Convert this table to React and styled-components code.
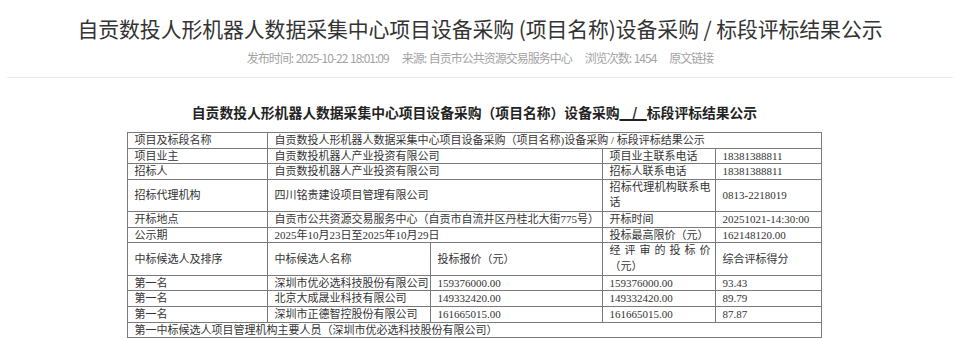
import React from 'react';
import styled, { createGlobalStyle } from 'styled-components';

const GlobalStyle = createGlobalStyle`
  body {
    margin: 0;
    background: #fff;
    font-family: 'Noto Sans CJK SC', 'Noto Sans', sans-serif;
  }
`;

const rows = [
  { label: '项目业主', value: '自贡数投机器人产业投资有限公司', label2: '项目业主联系电话', value2: '18381388811' },
  { label: '招标人', value: '自贡数投机器人产业投资有限公司', label2: '招标人联系电话', value2: '18381388811' },
  { label: '招标代理机构', value: '四川铭贵建设项目管理有限公司', label2: '招标代理机构联系电话', value2: '0813-2218019', wrap: true },
  { label: '开标地点', value: '自贡市公共资源交易服务中心（自贡市自流井区丹桂北大街775号）', label2: '开标时间', value2: '20251021-14:30:00' },
  { label: '公示期', value: '2025年10月23日至2025年10月29日', label2: '投标最高限价（元）', value2: '162148120.00' },
];

const candidates = [
  { name: '深圳市优必选科技股份有限公司', bid: '159376000.00', reviewed: '159376000.00', score: '93.43' },
  { name: '北京大成晟业科技有限公司', bid: '149332420.00', reviewed: '149332420.00', score: '89.79' },
  { name: '深圳市正德智控股份有限公司', bid: '161665015.00', reviewed: '161665015.00', score: '87.87' },
];

const App = () => {
  return (
    <Page>
      <GlobalStyle />
      <Header>
        <Title>自贡数投人形机器人数据采集中心项目设备采购 (项目名称)设备采购 / 标段评标结果公示</Title>
        <Meta>
          <span>发布时间: 2025-10-22 18:01:09</span>
          <span>来源: 自贡市公共资源交易服务中心</span>
          <span>浏览次数: 1454</span>
          <span>原文链接</span>
        </Meta>
      </Header>
      <Article>
        <SubTitle>
          自贡数投人形机器人数据采集中心项目设备采购（项目名称）设备采购
          <Blank>{'\u00a0\u00a0\u00a0\u00a0/\u00a0\u00a0\u00a0'}</Blank>
          标段评标结果公示
        </SubTitle>
        <Table>
          <colgroup>
            <col style={{ width: 140 }} />
            <col style={{ width: 163 }} />
            <col style={{ width: 172 }} />
            <col style={{ width: 113 }} />
            <col style={{ width: 105 }} />
          </colgroup>
          <tbody>
            <tr>
              <Cell>项目及标段名称</Cell>
              <Cell colSpan={4}>自贡数投人形机器人数据采集中心项目设备采购（项目名称)设备采购 / 标段评标结果公示</Cell>
            </tr>
            {rows.map((r) => (
              <tr key={r.label}>
                <Cell>{r.label}</Cell>
                <Cell colSpan={2}>{r.value}</Cell>
                <Cell $justify={r.wrap}>{r.label2}</Cell>
                <Cell>{r.value2}</Cell>
              </tr>
            ))}
            <tr>
              <Cell>中标候选人及排序</Cell>
              <Cell>中标候选人名称</Cell>
              <Cell>投标报价（元）</Cell>
              <Cell $justify>经评审的投标价（元）</Cell>
              <Cell>综合评标得分</Cell>
            </tr>
            {candidates.map((c) => (
              <tr key={c.name}>
                <Cell>第一名</Cell>
                <Cell>{c.name}</Cell>
                <Cell>{c.bid}</Cell>
                <Cell>{c.reviewed}</Cell>
                <Cell>{c.score}</Cell>
              </tr>
            ))}
            <tr>
              <Cell colSpan={5}>第一中标候选人项目管理机构主要人员（深圳市优必选科技股份有限公司）</Cell>
            </tr>
          </tbody>
        </Table>
      </Article>
    </Page>
  );
};

export default App;

const Page = styled.div`
  width: 960px;
  height: 340px;
  padding: 0 7px;
  box-sizing: border-box;
  overflow: hidden;
`;

const Header = styled.div`
  padding-top: 13px;
  padding-bottom: 11px;
  border-bottom: 1px solid #ebebeb;
  display: flex;
  flex-direction: column;
  align-items: center;
`;

const Title = styled.h1`
  margin: 0;
  font-size: 20.9px;
  font-weight: 400;
  line-height: 30px;
  color: #333;
  white-space: nowrap;
  letter-spacing: -0.1px;
`;

const Meta = styled.div`
  margin-top: 7px;
  display: flex;
  gap: 13px;
  font-size: 12px;
  line-height: 16px;
  letter-spacing: -1px;
  word-spacing: 1px;
  color: #a3a3a3;
  white-space: pre;
`;

const Article = styled.div`
  padding-right: 11px;
  display: flex;
  flex-direction: column;
  align-items: center;
`;

const SubTitle = styled.h2`
  margin: 24px 0 10px;
  font-size: 13.8px;
  font-weight: 700;
  line-height: 20px;
  color: #222;
  white-space: nowrap;
`;

const Blank = styled.span`
  text-decoration: underline;
  text-decoration-thickness: 2px;
  text-underline-offset: 1px;
`;

const Table = styled.table`
  width: 693px;
  table-layout: fixed;
  border-collapse: collapse;
  font-family: 'Liberation Serif', 'Noto Sans CJK SC', serif;
  font-size: 11px;
  color: #333;
`;

const Cell = styled.td`
  border: 1px solid #7a7a7a;
  padding: 0 5px 0 6px;
  line-height: ${(p) => (p.$justify ? '15.7px' : '14.6px')};
  text-align: ${(p) => (p.$justify ? 'justify' : 'left')};
  vertical-align: middle;
  white-space: ${(p) => (p.$justify ? 'normal' : 'nowrap')};
  overflow: hidden;
`;
